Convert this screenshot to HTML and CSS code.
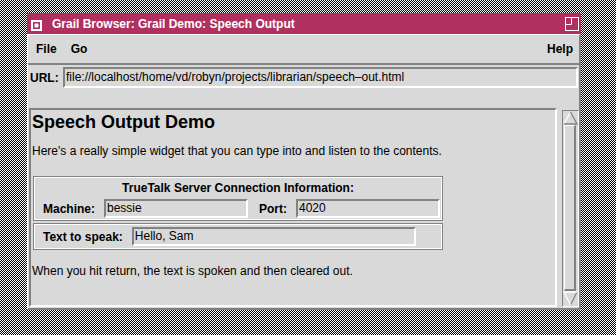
FILE: index.html
```html
<!DOCTYPE html>
<html>
<head>
<meta charset="utf-8">
<title>Grail Browser</title>
<link rel="stylesheet" href="styles.css">
</head>
<body>
<div class="window">
  <div class="titlebar">
    <span class="wm-menu">
      <svg width="11" height="11" viewBox="0 0 11 11"><rect x="0" y="0" width="11" height="11" fill="#fff"/><rect x="2" y="2" width="7" height="7" fill="#b03060"/><rect x="3.5" y="3.5" width="4" height="4" rx="1" fill="#fff"/></svg>
    </span>
    <span class="title">Grail Browser: Grail Demo: Speech Output</span>
    <span class="wm-max">
      <svg width="14" height="14" viewBox="0 0 14 14" fill="none" stroke="#fff" stroke-width="1"><rect x="0.5" y="0.5" width="13" height="13"/><path d="M6.5 0.5 V7.5 H0.5"/></svg>
    </span>
  </div>
  <div class="client">
    <div class="menubar">
      <span class="menu-item">File</span>
      <span class="menu-item">Go</span>
      <span class="menu-fill"></span>
      <span class="menu-item">Help</span>
    </div>
    <div class="urlbar">
      <span class="url-label">URL:</span>
      <div class="entry url-entry">file://localhost/home/vd/robyn/projects/librarian/speech–out.html</div>
    </div>
    <div class="viewer">
      <div class="page">
        <h1 class="heading">Speech Output Demo</h1>
        <p class="para first">Here's a really simple widget that you can type into and listen to the contents.</p>
        <div class="group group-server">
          <div class="group-title">TrueTalk Server Connection Information:</div>
          <div class="row">
            <span class="lbl">Machine:</span>
            <div class="entry field machine">bessie</div>
            <span class="lbl port-lbl">Port:</span>
            <div class="entry field port">4020</div>
          </div>
        </div>
        <div class="group group-speak">
          <div class="row">
            <span class="lbl">Text to speak:</span>
            <div class="entry field speak">Hello, Sam</div>
          </div>
        </div>
        <p class="para last">When you hit return, the text is spoken and then cleared out.</p>
      </div>
      <div class="scrollbar">
        <div class="arrow">
          <svg width="15" height="14" viewBox="0 0 15 14"><polygon points="7.5,1 14,13 1,13" fill="#d9d9d9"/><path d="M1 13 L7.5 1" stroke="#fff" stroke-width="1.3" fill="none"/><path d="M7.5 1 L14 13 H1" stroke="#828282" stroke-width="1.3" fill="none"/></svg>
        </div>
        <div class="thumb"></div>
        <div class="arrow">
          <svg width="15" height="15" viewBox="0 0 15 15"><polygon points="1,1 14,1 7.5,14" fill="#d9d9d9"/><path d="M7.5 14 L14 1" stroke="#828282" stroke-width="1.3" fill="none"/><path d="M7.5 14 L1 1 H14" stroke="#fff" stroke-width="1.3" fill="none"/></svg>
        </div>
      </div>
    </div>
  </div>
</div>
</body>
</html>
```
FILE: styles.css
```css
html, body {
  margin: 0;
  padding: 0;
  width: 616px;
  height: 335px;
  overflow: hidden;
}
body {
  background: repeating-conic-gradient(#000 0 25%, #fff 0 50%) 0 0 / 2px 2px;
  font-family: "Liberation Sans", Arial, sans-serif;
  color: #000;
  padding: 13px 0 0 27px;
  box-sizing: border-box;
}
.window {
  width: 554px;
  display: flex;
  flex-direction: column;
}
.titlebar {
  height: 21px;
  background: #b03060;
  color: #fff;
  display: flex;
  align-items: center;
  font-weight: bold;
  font-size: 12px;
}
.wm-menu {
  width: 11px;
  height: 11px;
  margin-left: 4px;
  margin-top: 3px;
  display: flex;
}
.title {
  margin-left: 10px;
  margin-top: 1px;
  flex: 1;
  white-space: nowrap;
}
.wm-max {
  width: 14px;
  height: 14px;
  margin-right: 2px;
  display: flex;
}
.client {
  background: #d9d9d9;
  border-top: 1px solid #fff;
  border-left: 1px solid #fff;
  border-right: 2px solid #828282;
  border-bottom: 2px solid #828282;
  height: 273px;
  display: flex;
  flex-direction: column;
}
.menubar {
  height: 28px;
  border-bottom: 2px solid #828282;
  display: flex;
  align-items: center;
  padding: 0 6px 0 8px;
  font-size: 12px;
  font-weight: bold;
  line-height: 28px;
}
.menu-item + .menu-item {
  margin-left: 14px;
}
.menu-fill {
  flex: 1;
}
.urlbar {
  display: flex;
  align-items: center;
  padding: 2px 1px 20px 2px;
  font-size: 12px;
}
.url-label {
  font-weight: bold;
  width: 33px;
}
.entry {
  background: #d9d9d9;
  border-top: 2px solid #828282;
  border-left: 2px solid #828282;
  border-right: 2px solid #fff;
  border-bottom: 2px solid #fff;
  box-sizing: border-box;
  white-space: nowrap;
  overflow: hidden;
  font-size: 12px;
}
.url-entry {
  flex: 1;
  height: 21px;
  line-height: 17px;
  padding-left: 1px;
}
.viewer {
  flex: 1;
  display: flex;
  align-items: flex-start;
}
.page {
  margin-left: 1px;
  width: 528px;
  height: 199px;
  box-sizing: border-box;
  border-top: 2px solid #828282;
  border-left: 2px solid #828282;
  border-right: 2px solid #fff;
  border-bottom: 2px solid #fff;
  padding: 0 0 0 1px;
  overflow: hidden;
}
.heading {
  margin: 2px 0 0 0;
  font-size: 18px;
  line-height: 20px;
  font-weight: bold;
}
.para {
  margin: 12px 0 0 0;
  font-size: 12px;
  line-height: 14px;
}
.para.last {
  margin-top: 14px;
}
.group {
  margin-left: 1px;
  width: 410px;
  box-sizing: border-box;
  border: 1px solid #828282;
  box-shadow: inset 0 0 0 1px #fff;
  font-size: 12px;
  line-height: 14px;
}
.group-server {
  margin-top: 18px;
  padding: 4px 0 2px 0;
}
.group-speak {
  margin-top: 2px;
  padding: 3px 0 3px 0;
}
.group-title {
  font-weight: bold;
  text-align: center;
  margin-bottom: 4px;
}
.row {
  display: flex;
  align-items: center;
  padding-left: 9px;
}
.lbl {
  font-weight: bold;
}
.field {
  height: 19px;
  line-height: 15px;
  padding-left: 1px;
}
.machine {
  margin-left: 9px;
  width: 144px;
}
.port-lbl {
  margin-left: 11px;
}
.port {
  margin-left: 9px;
  width: 144px;
}
.speak {
  margin-left: 9px;
  width: 284px;
}
.scrollbar {
  margin-left: 5px;
  margin-top: 2px;
  width: 17px;
  height: 197px;
  box-sizing: border-box;
  border-top: 1px solid #828282;
  border-left: 1px solid #828282;
  border-right: 1px solid #fff;
  border-bottom: 1px solid #fff;
  display: flex;
  flex-direction: column;
}
.arrow {
  height: 14px;
  display: flex;
}
.arrow:last-child {
  height: 15px;
}
.thumb {
  flex: 1;
  margin: 0 2px 0 1px;
  border-top: 1px solid #fff;
  border-left: 1px solid #fff;
  border-right: 2px solid #828282;
  border-bottom: 2px solid #828282;
}
```
